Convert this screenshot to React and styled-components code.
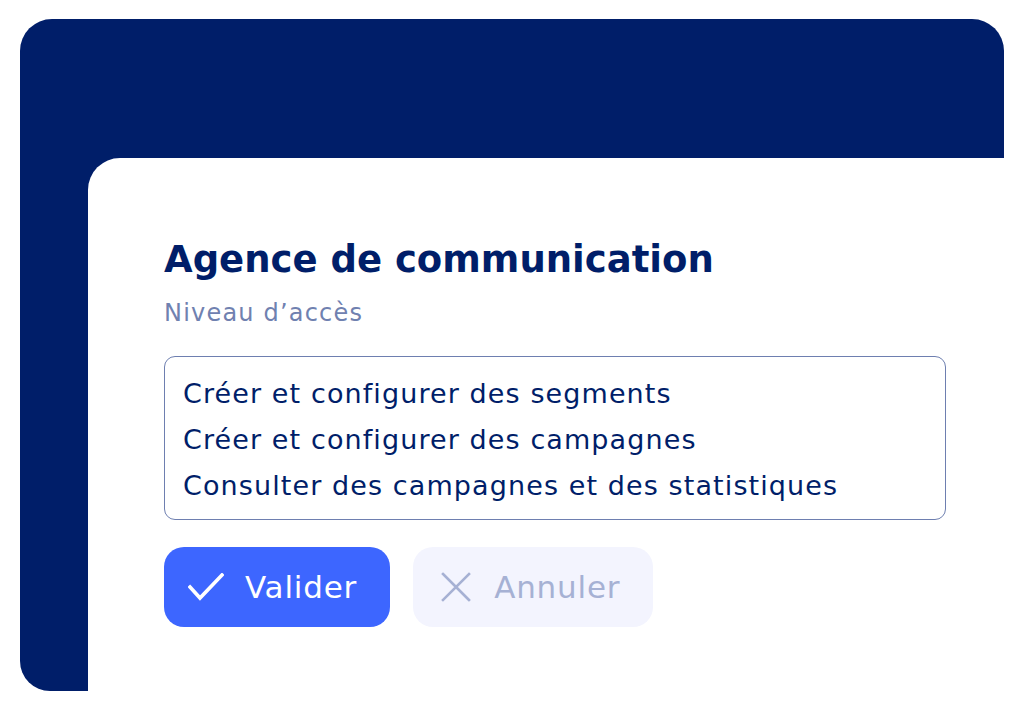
import React from 'react'
import styled, { createGlobalStyle } from 'styled-components'

const GlobalStyle = createGlobalStyle`
  html, body {
    margin: 0;
    padding: 0;
    background: #ffffff;
  }
  body {
    font-family: "DejaVu Sans", "Noto Sans", sans-serif;
  }
`;

const Page = styled.div`
  width: 1024px;
  height: 711px;
  padding: 19px 20px 20px 20px;
  box-sizing: border-box;
  overflow: hidden;
`;

const Frame = styled.div`
  height: 672px;
  background: #001e69;
  border-radius: 32px 32px 0 30px;
  padding: 139px 0 0 68px;
  box-sizing: border-box;
  overflow: hidden;
`;

const Card = styled.div`
  height: 100%;
  background: #ffffff;
  border-radius: 32px 0 0 0;
  padding: 76px 0 0 76px;
  box-sizing: border-box;
  display: flex;
  flex-direction: column;
`;

const Title = styled.h1`
  margin: 0;
  font-size: 37px;
  font-weight: 700;
  line-height: 52px;
  color: #001e69;
`;

const Subtitle = styled.div`
  margin-top: 10px;
  font-size: 24px;
  letter-spacing: 1.2px;
  line-height: 34px;
  color: #7081b0;
`;

const AccessBox = styled.ul`
  list-style: none;
  margin: 26px 0 0 0;
  width: 782px;
  height: 164px;
  box-sizing: border-box;
  padding: 14px 18px;
  border: 1px solid #6e7fb0;
  border-radius: 11px;
`;

const AccessItem = styled.li`
  font-size: 27px;
  letter-spacing: 1.1px;
  line-height: 46px;
  color: #001e69;
  white-space: nowrap;
`;

const Actions = styled.div`
  display: flex;
  gap: 23px;
  margin-top: 27px;
`;

const Button = styled.button`
  display: flex;
  align-items: center;
  gap: ${p => (p.$primary ? '21px' : '23px')};
  height: 80px;
  padding: 0 33px 0 ${p => (p.$primary ? '24px' : '28px')};
  border: none;
  border-radius: 20px;
  background: ${p => (p.$primary ? '#3d66ff' : '#f3f4fe')};
  color: ${p => (p.$primary ? '#ffffff' : '#a6b1d4')};
  font-family: inherit;
  font-size: 31px;
  letter-spacing: 0.8px;
  cursor: pointer;
`;

const Icon = styled.svg`
  flex-shrink: 0;
`;

const accessRights = [
  'Créer et configurer des segments',
  'Créer et configurer des campagnes',
  'Consulter des campagnes et des statistiques',
];

export default function App() {
  return (
    <>
      <GlobalStyle />
      <Page>
        <Frame>
          <Card>
            <Title>Agence de communication</Title>
            <Subtitle>Niveau d’accès</Subtitle>
            <AccessBox>
              {accessRights.map(item => (
                <AccessItem key={item}>{item}</AccessItem>
              ))}
            </AccessBox>
            <Actions>
              <Button $primary>
                <Icon width="36" height="28" viewBox="0 0 36 28" fill="none" stroke="currentColor" strokeWidth="3.6" strokeLinecap="square">
                  <path d="M2 14 L12 25 L34 2" />
                </Icon>
                Valider
              </Button>
              <Button>
                <Icon width="30" height="30" viewBox="0 0 30 30" fill="none" stroke="currentColor" strokeWidth="2.6" strokeLinecap="square">
                  <path d="M2 2 L28 28 M28 2 L2 28" />
                </Icon>
                Annuler
              </Button>
            </Actions>
          </Card>
        </Frame>
      </Page>
    </>
  )
}
